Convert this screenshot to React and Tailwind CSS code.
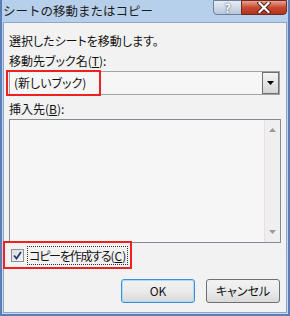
import React from 'react'

const jp = { fontFamily: '"Noto Sans CJK JP", "Noto Sans", sans-serif' }

const Dialog = () => {
  return (
    <div className="w-[290px] h-[316px] overflow-hidden bg-gradient-to-b from-[#b6cfea] to-[#c9dbf0] border-l-2 border-r-2 border-b-2 border-[#5a7fb8] flex flex-col" style={jp}>
      {/* title bar */}
      <div className="h-[22px] flex items-start relative">
        <div className="pl-[1px] pt-[2px] text-[12.5px] leading-[18px] text-[#1b1b1b]">シートの移動またはコピー</div>
        <div className="absolute top-0 left-[211px] w-[29px] h-[15px] rounded-bl-[4px] border border-[#6d7f99] bg-gradient-to-b from-[#e8eef6] to-[#b8c7db] flex items-center justify-center text-[12px] font-bold text-white leading-none [text-shadow:0_0_2px_#223]">?</div>
        <div className="absolute top-0 left-[239px] w-[46px] h-[15px] rounded-br-[4px] border border-[#6b2a22] bg-gradient-to-b from-[#e8a192] via-[#c7492f] to-[#b5321c] flex items-center justify-center">
          <svg width="14" height="11" viewBox="0 0 14 11">
            <path d="M2.5 1 L11.5 10 M11.5 1 L2.5 10" stroke="#3a1a14" strokeWidth="4" strokeLinecap="square" />
            <path d="M2.5 1 L11.5 10 M11.5 1 L2.5 10" stroke="#ffffff" strokeWidth="2.2" strokeLinecap="square" />
          </svg>
        </div>
      </div>
      {/* client area */}
      <div className="flex-1 ml-[1px] mr-[1px] mb-[1px] border border-[#8fa5c2] bg-[#f2f2f2] flex flex-col pl-[5px] pr-[5px] pt-[8px] text-[12px] text-[#111] [font-feature-settings:'palt']">
        <div className="h-[20px] leading-[20px]">選択したシートを移動します。</div>
        <div className="h-[20px] leading-[20px]">移動先ブック名(<span className="underline">T</span>):</div>
        <div className="relative h-[24px] mr-[1px] border border-[#a3a3a3] bg-[#f6f6f6] flex items-center">
          <div className="pl-[4px] flex-1 leading-[20px]">(新しいブック)</div>
          <div className="w-[17px] h-[22px] border border-[#6f6f6f] bg-gradient-to-b from-[#f4f4f4] to-[#d6d6d6] flex items-center justify-center">
            <svg width="7" height="5" viewBox="0 0 7 5"><path d="M0 0 H7 L3.5 4 Z" fill="#000" /></svg>
          </div>
          <div className="absolute left-[-4px] top-[-2px] w-[95px] h-[26px] border-2 border-[#ee2020]" />
        </div>
        <div className="mt-[5px] h-[19px] leading-[18px]">挿入先(<span className="underline">B</span>):</div>
        <div className="h-[124px] border border-[#838a96] bg-[#f6f6f6] flex">
          <div className="flex-1" />
          <div className="w-[16px] border-l border-[#ecdede] bg-[#efefef] flex flex-col items-center justify-between py-[8px]">
            <svg width="7" height="4" viewBox="0 0 7 4"><path d="M3.5 0 L7 4 H0 Z" fill="#9a9a9a" /></svg>
            <svg width="7" height="4" viewBox="0 0 7 4"><path d="M0 0 H7 L3.5 4 Z" fill="#9a9a9a" /></svg>
          </div>
        </div>
        <div className="mt-[-2px] ml-[-6px] w-[129px] h-[28px] border-2 border-[#ee2020] flex items-center pl-[6px] gap-[3px] whitespace-nowrap">
          <div className="shrink-0 w-[13px] h-[13px] border border-[#8f8f8f] bg-gradient-to-br from-[#dcdcdc] to-[#f6f6f6] flex items-center justify-center">
            <svg width="9" height="9" viewBox="0 0 9 9"><path d="M1 4.5 L3.5 7.5 L8 1" stroke="#1f3b7a" strokeWidth="1.8" fill="none" /></svg>
          </div>
          <div className="shrink-0 border border-dotted border-[#333] px-[1px] leading-[17px]"><span className="tracking-[-1.2px]">コピーを作成する</span>(<span className="underline">C</span>)</div>
        </div>
        <div className="mt-[10px] flex justify-end gap-[11px] pr-[1px]">
          <div className="w-[74px] h-[24px] rounded-[3px] border border-[#3c8ed6] bg-gradient-to-b from-[#f2f2f2] via-[#ebebeb] to-[#d9d9d9] shadow-[inset_0_0_0_1px_#a8def6] flex items-center justify-center">OK</div>
          <div className="w-[74px] h-[24px] rounded-[3px] border border-[#707070] bg-gradient-to-b from-[#f2f2f2] via-[#ebebeb] to-[#d9d9d9] flex items-center justify-center">キャンセル</div>
        </div>
      </div>
    </div>
  )
}

export default function App() {
  return <Dialog />
}
